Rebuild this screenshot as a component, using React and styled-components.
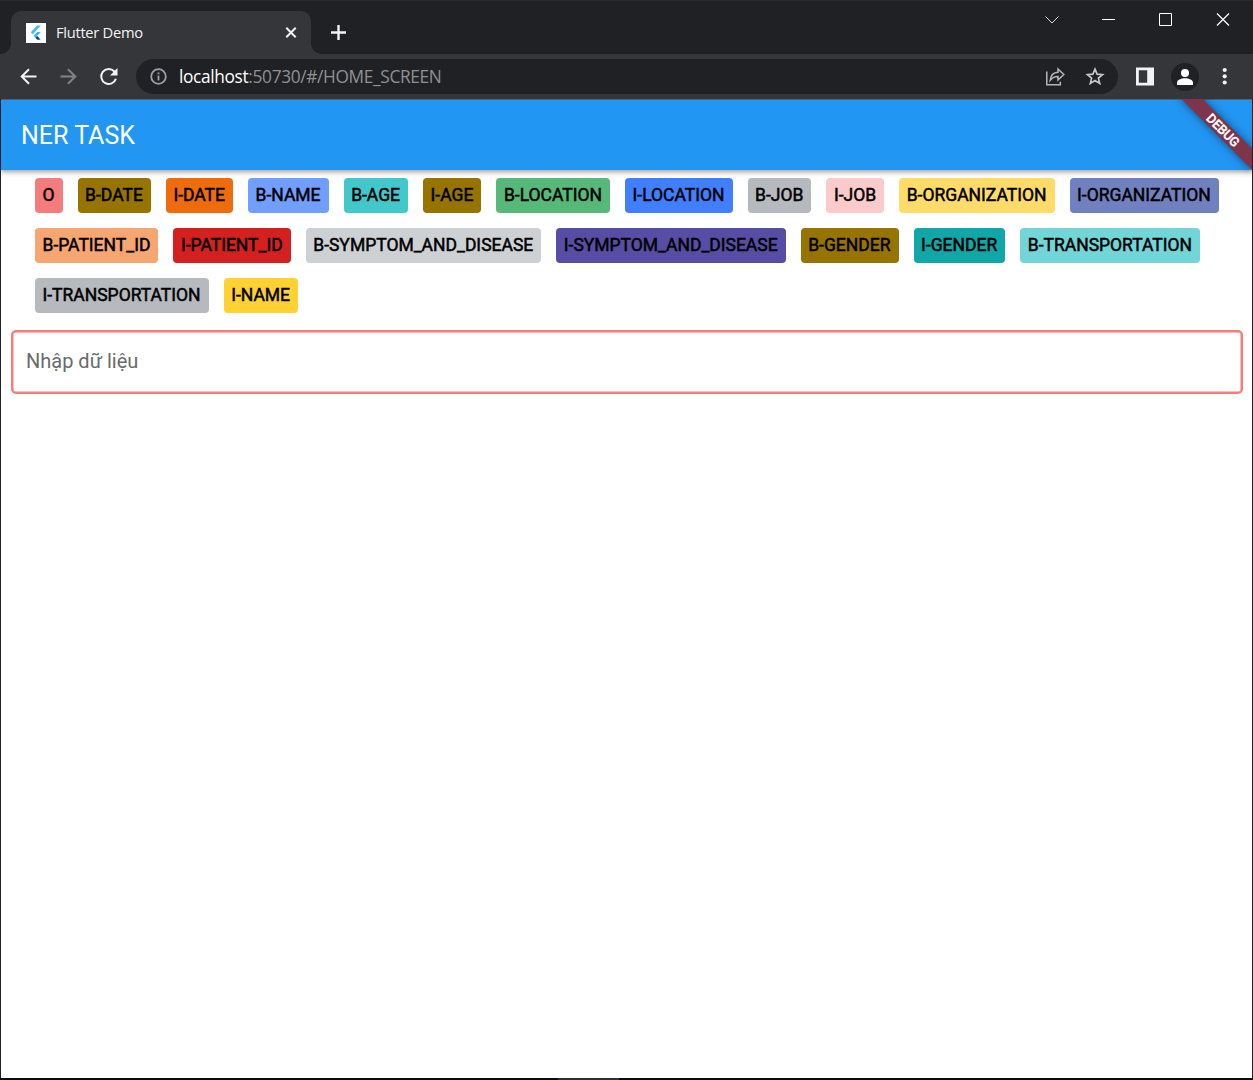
import React from "react";
import styled, { createGlobalStyle } from "styled-components";

const GlobalStyle = createGlobalStyle`
  * { box-sizing: border-box; }
  body { margin: 0; background: #202124; overflow: hidden; }
`;

const uiFont = `"Segoe UI", "Open Sans", "Noto Sans", sans-serif`;

const BrowserWindow = styled.div`
  display: flex;
  flex-direction: column;
  width: 1253px;
  height: 1080px;
  background: #202124;
  font-family: ${uiFont};
`;

const TabStrip = styled.header`
  display: flex;
  height: 54px;
  padding-left: 11px;
  border-top: 1px solid #2a2c2b;
  background: #202124;
`;

const Tab = styled.div`
  position: relative;
  display: flex;
  align-items: center;
  width: 300px;
  height: 43px;
  margin-top: 10px;
  padding: 0 11px 0 15px;
  border-radius: 10px 10px 0 0;
  background: #35363a;

  &::before,
  &::after {
    content: "";
    position: absolute;
    bottom: 0;
    width: 10px;
    height: 10px;
  }
  &::before {
    left: -10px;
    background: radial-gradient(circle at 0 0, transparent 9.5px, #35363a 10px);
  }
  &::after {
    right: -10px;
    background: radial-gradient(circle at 100% 0, transparent 9.5px, #35363a 10px);
  }
`;

const Favicon = styled.svg`
  flex: none;
  width: 20px;
  height: 20px;
  background: #fff;
`;

const TabTitle = styled.span`
  flex: 1;
  margin-left: 10px;
  padding-bottom: 2px;
  color: #f1f3f4;
  font-size: 14.7px;
  letter-spacing: -0.28px;
  white-space: nowrap;
`;

const Icon = styled.svg`
  display: block;
  flex: none;
  width: ${(p) => p.$size || 20}px;
  height: ${(p) => p.$size || 20}px;
  fill: none;
  stroke: ${(p) => p.$color || "#f1f3f4"};
  stroke-width: ${(p) => p.$weight || 2};
`;

const NewTab = styled.div`
  display: flex;
  align-items: center;
  height: 43px;
  margin: 9px 0 0 17px;
`;

const Controls = styled.div`
  display: flex;
  align-items: center;
  gap: 37px;
  height: 36px;
  margin-left: auto;
  padding-right: 20px;
`;

const Toolbar = styled.div`
  display: flex;
  align-items: center;
  height: 45px;
  padding: 0 12px 0 18px;
  background: #35363a;
`;

const Navigation = styled.nav`
  display: flex;
  gap: 20px;
`;

const AddressBar = styled.div`
  display: flex;
  align-items: center;
  width: 982px;
  height: 35px;
  margin-left: 18px;
  padding: 0 13px 0 12px;
  border-radius: 18px;
  background: #202124;
`;

const Address = styled.span`
  flex: 1;
  margin-left: 11px;
  color: #8f9194;
  font-size: 17.3px;
  letter-spacing: -0.34px;
  white-space: nowrap;
`;

const Host = styled.span`
  color: #fff;
`;

const AddressActions = styled.div`
  display: flex;
  gap: 20px;
`;

const ToolbarActions = styled.div`
  display: flex;
  align-items: center;
  gap: 12px;
  margin-left: auto;
`;

const Avatar = styled.div`
  display: grid;
  place-items: center;
  width: 28px;
  height: 28px;
  margin-left: 4px;
  border-radius: 50%;
  background: #202124;
`;

const Viewport = styled.main`
  position: relative;
  display: flex;
  flex: 1;
  flex-direction: column;
  overflow: hidden;
  margin: 0 1px;
  background: #fff;
  font-family: Roboto, sans-serif;
`;

const AppBar = styled.div`
  display: flex;
  flex: none;
  align-items: center;
  height: 71px;
  padding-left: 20px;
  border-top: 1px solid #52616f;
  background: #2196f3;
  box-shadow: 0 2px 5px rgba(0, 0, 0, 0.38);
`;

const Title = styled.h1`
  margin: 0;
  color: #fff;
  font-size: 25px;
  font-weight: 400;
  letter-spacing: 0;
`;

const Banner = styled.div`
  position: absolute;
  top: 35px;
  right: -50px;
  width: 100px;
  height: 15px;
  padding-left: 3px;
  transform: rotate(45deg);
  transform-origin: 50px -35px;
  background: #7e354b;
  box-shadow: 0 0 8px rgba(0, 0, 0, 0.5);
  color: #fff;
  font-size: 12.75px;
  font-weight: 400;
  -webkit-text-stroke: 0.6px #fff;
  line-height: 15px;
  text-align: center;
`;

const Labels = styled.div`
  display: flex;
  flex-wrap: wrap;
  gap: 15px;
  padding: 7.5px 30px 17.5px 34px;
`;

const Label = styled.div`
  height: 35px;
  padding: 0 8.05px 0 7.5px;
  border-radius: 4px;
  background: ${(p) => p.$color};
  color: #000;
  font-size: 17.5px;
  font-weight: 400;
  -webkit-text-stroke: 0.5px #000;
  line-height: 35px;
  white-space: nowrap;
`;

const Field = styled.input`
  height: 63.5px;
  margin: 0 9px 0 10px;
  padding: 0 13px 2px;
  border: 2px solid #f47c7c;
  border-radius: 5px;
  box-shadow: inset 0 0 0 0.5px #f47c7c;
  outline: none;
  background: #fff;
  font-family: Roboto, sans-serif;
  font-size: 20px;

  &::placeholder {
    color: #6a6a6a;
    opacity: 1;
  }
`;

const WindowEdge = styled.footer`
  display: flex;
  justify-content: center;
  height: 2px;
  padding-right: 76px;
  background: #0d0b0f;
`;

const EdgeAccent = styled.span`
  width: 61px;
  background: #302f31;
`;

const labels = [
  ["O", "#f47c7c"],
  ["B-DATE", "#977400"],
  ["I-DATE", "#ef6c0d"],
  ["B-NAME", "#709fff"],
  ["B-AGE", "#42c8cb"],
  ["I-AGE", "#977400"],
  ["B-LOCATION", "#56b979"],
  ["I-LOCATION", "#407fff"],
  ["B-JOB", "#b6b9be"],
  ["I-JOB", "#fbcaca"],
  ["B-ORGANIZATION", "#ffdc69"],
  ["I-ORGANIZATION", "#7181bf"],
  ["B-PATIENT_ID", "#f5a671"],
  ["I-PATIENT_ID", "#d52020"],
  ["B-SYMPTOM_AND_DISEASE", "#ced1d4"],
  ["I-SYMPTOM_AND_DISEASE", "#584da5"],
  ["B-GENDER", "#977400"],
  ["I-GENDER", "#11a7a8"],
  ["B-TRANSPORTATION", "#72d5d7"],
  ["I-TRANSPORTATION", "#b6b9be"],
  ["I-NAME", "#ffd133"],
];

export default function App() {
  return (
    <BrowserWindow>
      <GlobalStyle />
      <TabStrip>
        <Tab>
          <Favicon viewBox="0 0 20 20">
            <path d="M11.2 2.5h3.6L6.8 11.3 4.8 9.2z" fill="#42bdf5" />
            <path d="M11.4 9h3.4l-3.6 3.8 1.9 2-2 1.6-3.6-3.6z" fill="#42b3f0" />
            <path d="m9.6 15 1.8-1.8 3.2 3.5h-3.2z" fill="#0a3fa0" />
          </Favicon>
          <TabTitle>Flutter Demo</TabTitle>
          <Icon $size={18} viewBox="0 0 18 18">
            <path d="m4.3 3.8 9.4 9.4m0-9.4-9.4 9.4" />
          </Icon>
        </Tab>
        <NewTab>
          <Icon $weight={2.4} viewBox="0 0 20 20">
            <path d="M10.5 3v15M3 10.5h15" />
          </Icon>
        </NewTab>
        <Controls>
          <Icon $weight={1} $color="#d8d8d8" viewBox="0 0 20 20">
            <path d="m3.5 7.5 6.5 6.5 6.5-6.5" />
          </Icon>
          <Icon $weight={1} $color="#fff" viewBox="0 0 20 20">
            <path d="M3 10.5h13" />
          </Icon>
          <Icon $weight={1} $color="#fff" viewBox="0 0 20 20">
            <path d="M3.5 4.5h12v12h-12z" />
          </Icon>
          <Icon $weight={1.2} $color="#fff" viewBox="0 0 20 20">
            <path d="m4 4.5 12 12m0-12-12 12" />
          </Icon>
        </Controls>
      </TabStrip>
      <Toolbar>
        <Navigation>
          <Icon viewBox="0 0 20 20">
            <path d="M18.5 9.5H4m7-7.3L3.7 9.5l7.3 7.3" />
          </Icon>
          <Icon $color="#828386" viewBox="0 0 20 20">
            <path d="M2.5 9.5H17M10 2.2l7.3 7.3-7.3 7.3" />
          </Icon>
          <Icon viewBox="0 0 20 20">
            <path d="M17.9 11.7A7.5 7.5 0 1 1 16.2 4.3l1.2 1.3" />
            <path d="M19.5 1v7.5H12z" fill="#f1f3f4" stroke="none" />
          </Icon>
        </Navigation>
        <AddressBar>
          <Icon $color="#9aa0a6" $weight={1.8} viewBox="0 0 20 20">
            <circle cx="10.5" cy="9.5" r="7.3" />
            <path d="M10.5 8.5v5m0-8v1.8" />
          </Icon>
          <Address>
            <Host>localhost</Host>:50730/#/HOME_SCREEN
          </Address>
          <AddressActions>
            <Icon $color="#b4b6b8" $weight={1.5} viewBox="0 0 20 20">
              <path d="M1.8 4.5v13.2h13.5v-3" />
              <path d="M13 2v3.3C8.5 5.5 5.7 8 5.2 13.2c2-2.6 4.5-3.7 7.8-3.7V13L18.8 7.5z" />
            </Icon>
            <Icon $color="#c4c6c8" $weight={1.7} viewBox="0 0 20 20">
              <path d="m10 2.2 2.1 5 5.4.4-4.1 3.5 1.3 5.3-4.7-2.8-4.7 2.8 1.3-5.3-4.1-3.5 5.4-.4z" />
            </Icon>
          </AddressActions>
        </AddressBar>
        <ToolbarActions>
          <Icon viewBox="0 0 20 20">
            <path fillRule="evenodd" d="M1 .5h18v18H1zm2.8 2.8v12.4h8.4V3.3z" fill="#f1f3f4" stroke="none" />
          </Icon>
          <Avatar>
            <Icon viewBox="0 0 20 20">
              <g fill="#fff" stroke="none">
                <circle cx="10" cy="6" r="4" />
                <path d="M2 18v-2.2c0-2.9 4.1-4.5 8-4.5s8 1.6 8 4.5V18z" />
              </g>
            </Icon>
          </Avatar>
          <Icon $size={30} viewBox="0 0 30 30">
            <g fill="#f1f3f4" stroke="none">
              <circle cx="13.7" cy="8" r="2.1" />
              <circle cx="13.7" cy="14.3" r="2.1" />
              <circle cx="13.7" cy="20.5" r="2.1" />
            </g>
          </Icon>
        </ToolbarActions>
      </Toolbar>
      <Viewport>
        <AppBar>
          <Title>NER TASK</Title>
        </AppBar>
        <Labels>
          {labels.map(([name, color]) => (
            <Label key={name} $color={color}>
              {name}
            </Label>
          ))}
        </Labels>
        <Field placeholder="Nhập dữ liệu" />
        <Banner>DEBUG</Banner>
      </Viewport>
      <WindowEdge>
        <EdgeAccent />
      </WindowEdge>
    </BrowserWindow>
  );
}
